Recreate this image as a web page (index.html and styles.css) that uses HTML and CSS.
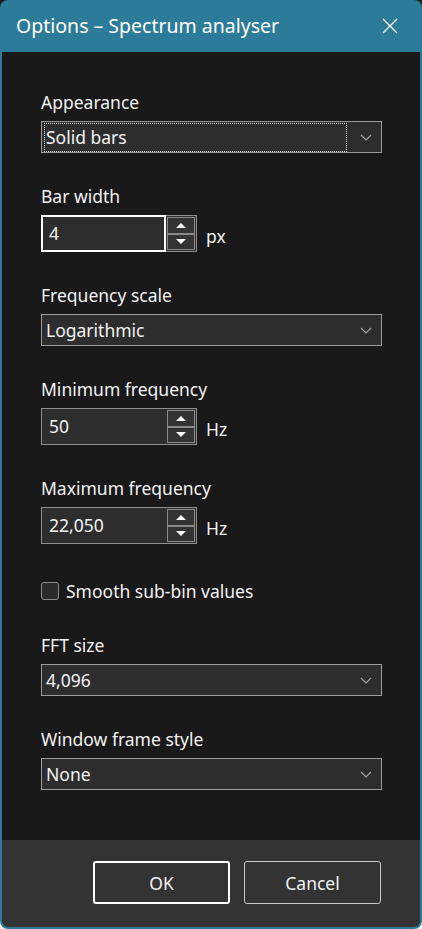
FILE: index.html
```html
<!DOCTYPE html>
<html lang="en">
<head>
    <meta charset="UTF-8">
    <meta name="viewport" content="width=device-width, initial-scale=1.0">
    <title>Options – Spectrum analyser</title>
    <link rel="stylesheet" href="styles.css">
</head>
<body>
    <div class="window">
        <div class="titleBar">
            <span class="title">Options – Spectrum analyser</span>
            <svg class="closeIcon" width="16" height="16" viewBox="0 0 16 16">
                <path d="M1 1 L15 15 M15 1 L1 15" stroke="#ffffff" stroke-width="1.3" fill="none"/>
            </svg>
        </div>

        <div class="content">
            <div class="field">
                <label>Appearance</label>
                <div class="select">
                    <span class="value focused">Solid bars</span>
                    <svg class="chevron" width="12" height="7" viewBox="0 0 12 7"><path d="M1 1 L6 6 L11 1" stroke="#a8a8a8" stroke-width="1.1" fill="none"/></svg>
                </div>
            </div>

            <div class="field tall">
                <label>Bar width</label>
                <div class="spinRow">
                    <div class="spin">
                        <div class="spinInput active">4</div>
                        <div class="spinButtons">
                            <div class="spinBtn"><span class="arrowUp"></span></div>
                            <div class="spinBtn"><span class="arrowDown"></span></div>
                        </div>
                    </div>
                    <span class="unit">px</span>
                </div>
            </div>

            <div class="field">
                <label>Frequency scale</label>
                <div class="select">
                    <span class="value">Logarithmic</span>
                    <svg class="chevron" width="12" height="7" viewBox="0 0 12 7"><path d="M1 1 L6 6 L11 1" stroke="#a8a8a8" stroke-width="1.1" fill="none"/></svg>
                </div>
            </div>

            <div class="field tall">
                <label>Minimum frequency</label>
                <div class="spinRow">
                    <div class="spin">
                        <div class="spinInput">50</div>
                        <div class="spinButtons">
                            <div class="spinBtn"><span class="arrowUp"></span></div>
                            <div class="spinBtn"><span class="arrowDown"></span></div>
                        </div>
                    </div>
                    <span class="unit">Hz</span>
                </div>
            </div>

            <div class="field tall">
                <label>Maximum frequency</label>
                <div class="spinRow">
                    <div class="spin">
                        <div class="spinInput">22,050</div>
                        <div class="spinButtons">
                            <div class="spinBtn"><span class="arrowUp"></span></div>
                            <div class="spinBtn"><span class="arrowDown"></span></div>
                        </div>
                    </div>
                    <span class="unit">Hz</span>
                </div>
            </div>

            <div class="checkRow">
                <span class="checkbox"></span>
                <span class="checkLabel">Smooth sub-bin values</span>
            </div>

            <div class="field">
                <label>FFT size</label>
                <div class="select">
                    <span class="value">4,096</span>
                    <svg class="chevron" width="12" height="7" viewBox="0 0 12 7"><path d="M1 1 L6 6 L11 1" stroke="#a8a8a8" stroke-width="1.1" fill="none"/></svg>
                </div>
            </div>

            <div class="field">
                <label>Window frame style</label>
                <div class="select">
                    <span class="value">None</span>
                    <svg class="chevron" width="12" height="7" viewBox="0 0 12 7"><path d="M1 1 L6 6 L11 1" stroke="#a8a8a8" stroke-width="1.1" fill="none"/></svg>
                </div>
            </div>
        </div>

        <div class="footer">
            <button class="btn default">OK</button>
            <button class="btn">Cancel</button>
        </div>
    </div>
</body>
</html>
```

FILE: styles.css
```css
/* Reset */
* {
    margin: 0;
    padding: 0;
    box-sizing: border-box;
}

html {
    background: linear-gradient(#1c1c1c 50%, #f0f0f0 50%);
}

body {
    font-family: "Noto Sans", "Open Sans", sans-serif;
    color: #f2f2f2;
    width: 422px;
    height: 929px;
}

/* Window frame */
.window {
    display: flex;
    flex-direction: column;
    height: 929px;
    background-color: #2c7b99;
    border-radius: 8px;
    padding: 0 2px 2px 2px;
}

.titleBar {
    height: 52px;
    display: flex;
    align-items: center;
    justify-content: space-between;
    padding: 0 22px 0 14px;
}

.title {
    font-size: 19.5px;
    color: #ffffff;
    padding-bottom: 1px;
}

.closeIcon {
    margin-bottom: 1px;
}

/* Main area */
.content {
    flex: 1;
    background-color: #191919;
    padding: 39px 38px 0 39px;
    display: flex;
    flex-direction: column;
}

.field {
    margin-bottom: 32px;
}

.field label {
    display: block;
    font-size: 17.5px;
    line-height: 22px;
    margin-bottom: 8px;
}

.select {
    height: 32px;
    background-color: #2d2d2d;
    border: 1px solid #9c9c9c;
    display: flex;
    align-items: center;
    justify-content: space-between;
    padding: 0 9px 0 2px;
}

.value {
    font-size: 17.5px;
    line-height: 26px;
    padding: 0 0 1px 1px;
    flex: 1;
    margin-right: 13px;
    border: 1px solid transparent;
}

.value.focused {
    border: 1px dotted #dcdcdc;
}

.chevron {
    flex: none;
}

/* Spin boxes */
.spinRow {
    display: flex;
    align-items: center;
}

.spin {
    display: flex;
    width: 156px;
    height: 37px;
    border: 1px solid #8e8e8e;
    background-color: #2d2d2d;
}

.spinInput {
    flex: 1;
    font-size: 17.5px;
    padding: 0 0 2px 7px;
    display: flex;
    align-items: center;
    margin: -1px 0 -1px -1px;
    border: 1px solid transparent;
}

.spinInput.active {
    border: 2px solid #ffffff;
    padding-left: 6px;
}

.spinButtons {
    width: 30px;
    display: flex;
    flex-direction: column;
    padding: 1px;
}

.spinBtn {
    flex: 1;
    border: 1px solid #8a8a8a;
    background-color: #333333;
    display: flex;
    align-items: center;
    justify-content: center;
}

.arrowUp {
    width: 0;
    height: 0;
    border-left: 5px solid transparent;
    border-right: 5px solid transparent;
    border-bottom: 5px solid #ffffff;
}

.arrowDown {
    width: 0;
    height: 0;
    border-left: 5px solid transparent;
    border-right: 5px solid transparent;
    border-top: 5px solid #ffffff;
}

.unit {
    font-size: 17.5px;
    margin-left: 9px;
    padding-top: 4px;
}

/* Checkbox */
.checkRow {
    display: flex;
    align-items: center;
    height: 18px;
    margin: 6px 0 34px 0;
}

.checkbox {
    width: 18px;
    height: 18px;
    border: 1px solid #8a8a8a;
    border-radius: 3px;
    background-color: #2b2b2b;
}

.checkLabel {
    font-size: 17.5px;
    margin-left: 7px;
}

/* Bottom buttons */
.footer {
    height: 87px;
    background-color: #333333;
    border-radius: 0 0 6px 6px;
    display: flex;
    justify-content: flex-end;
    gap: 14px;
    padding: 21px 39px 0 0;
}

.btn {
    width: 137px;
    height: 43px;
    background-color: #333333;
    border: 1px solid #c8c8c8;
    border-radius: 3px;
    color: #f2f2f2;
    font-family: "Noto Sans", "Open Sans", sans-serif;
    font-size: 17.5px;
}

.btn.default {
    border: 2px solid #ffffff;
}
```
